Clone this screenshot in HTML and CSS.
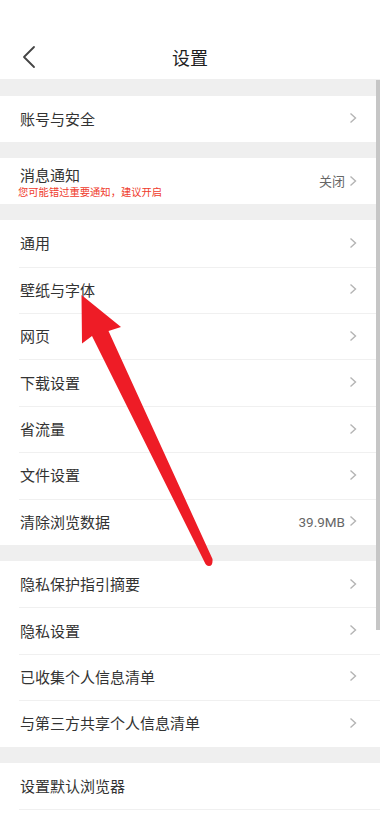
FILE: index.html
```html
<!DOCTYPE html>
<html lang="zh-CN">
<head>
<meta charset="utf-8">
<title>设置</title>
<link rel="stylesheet" href="styles.css">
</head>
<body>
<div class="page">
  <header class="header">
    <div class="nav">
      <svg class="back" width="14" height="24" viewBox="0 0 14 24"><path d="M12 2 L2 12 L12 22" fill="none" stroke="#444" stroke-width="1.8" stroke-linecap="round" stroke-linejoin="round"/></svg>
      <h1 class="title">设置</h1>
    </div>
  </header>

  <div class="gap first"></div>
  <div class="group">
    <div class="row"><span class="label">账号与安全</span><span class="right"><svg class="chev" width="8" height="12" viewBox="0 0 8 12"><path d="M1.5 1.5 L6.5 6 L1.5 10.5" fill="none" stroke="#b4b4b4" stroke-width="1.4"/></svg></span></div>
  </div>

  <div class="gap"></div>
  <div class="group">
    <div class="row">
      <div class="stack"><span class="label">消息通知</span><span class="sub">您可能错过重要通知，建议开启</span></div>
      <span class="right"><span class="value">关闭</span><svg class="chev" width="8" height="12" viewBox="0 0 8 12"><path d="M1.5 1.5 L6.5 6 L1.5 10.5" fill="none" stroke="#b4b4b4" stroke-width="1.4"/></svg></span>
    </div>
  </div>

  <div class="gap"></div>
  <div class="group">
    <div class="row"><span class="label">通用</span><span class="right"><svg class="chev" width="8" height="12" viewBox="0 0 8 12"><path d="M1.5 1.5 L6.5 6 L1.5 10.5" fill="none" stroke="#b4b4b4" stroke-width="1.4"/></svg></span></div>
    <div class="row"><span class="label">壁纸与字体</span><span class="right"><svg class="chev" width="8" height="12" viewBox="0 0 8 12"><path d="M1.5 1.5 L6.5 6 L1.5 10.5" fill="none" stroke="#b4b4b4" stroke-width="1.4"/></svg></span></div>
    <div class="row"><span class="label">网页</span><span class="right"><svg class="chev" width="8" height="12" viewBox="0 0 8 12"><path d="M1.5 1.5 L6.5 6 L1.5 10.5" fill="none" stroke="#b4b4b4" stroke-width="1.4"/></svg></span></div>
    <div class="row"><span class="label">下载设置</span><span class="right"><svg class="chev" width="8" height="12" viewBox="0 0 8 12"><path d="M1.5 1.5 L6.5 6 L1.5 10.5" fill="none" stroke="#b4b4b4" stroke-width="1.4"/></svg></span></div>
    <div class="row"><span class="label">省流量</span><span class="right"><svg class="chev" width="8" height="12" viewBox="0 0 8 12"><path d="M1.5 1.5 L6.5 6 L1.5 10.5" fill="none" stroke="#b4b4b4" stroke-width="1.4"/></svg></span></div>
    <div class="row"><span class="label">文件设置</span><span class="right"><svg class="chev" width="8" height="12" viewBox="0 0 8 12"><path d="M1.5 1.5 L6.5 6 L1.5 10.5" fill="none" stroke="#b4b4b4" stroke-width="1.4"/></svg></span></div>
    <div class="row"><span class="label">清除浏览数据</span><span class="right"><span class="value num">39.9MB</span><svg class="chev" width="8" height="12" viewBox="0 0 8 12"><path d="M1.5 1.5 L6.5 6 L1.5 10.5" fill="none" stroke="#b4b4b4" stroke-width="1.4"/></svg></span></div>
  </div>

  <div class="gap"></div>
  <div class="group">
    <div class="row"><span class="label">隐私保护指引摘要</span><span class="right"><svg class="chev" width="8" height="12" viewBox="0 0 8 12"><path d="M1.5 1.5 L6.5 6 L1.5 10.5" fill="none" stroke="#b4b4b4" stroke-width="1.4"/></svg></span></div>
    <div class="row"><span class="label">隐私设置</span><span class="right"><svg class="chev" width="8" height="12" viewBox="0 0 8 12"><path d="M1.5 1.5 L6.5 6 L1.5 10.5" fill="none" stroke="#b4b4b4" stroke-width="1.4"/></svg></span></div>
    <div class="row"><span class="label">已收集个人信息清单</span><span class="right"><svg class="chev" width="8" height="12" viewBox="0 0 8 12"><path d="M1.5 1.5 L6.5 6 L1.5 10.5" fill="none" stroke="#b4b4b4" stroke-width="1.4"/></svg></span></div>
    <div class="row"><span class="label">与第三方共享个人信息清单</span><span class="right"><svg class="chev" width="8" height="12" viewBox="0 0 8 12"><path d="M1.5 1.5 L6.5 6 L1.5 10.5" fill="none" stroke="#b4b4b4" stroke-width="1.4"/></svg></span></div>
  </div>

  <div class="gap"></div>
  <div class="group">
    <div class="row"><span class="label">设置默认浏览器</span></div>
    <div class="row"></div>
  </div>

  <div class="scrollbar"></div>

  <svg class="arrow" width="380" height="823" viewBox="0 0 380 823">
    <path d="M81.5 295 L121 327 L108.5 331 L212.5 559 Q213 566 209 566 Q206 566 204.5 562 L92 336 L82 343.5 Z" fill="#ee1c26"/>
  </svg>
</div>
</body>
</html>
```

FILE: styles.css
```css
* { box-sizing: border-box; }
html, body { margin: 0; padding: 0; background: #fff; }
body {
  font-family: "Noto Sans CJK SC", "Noto Sans", sans-serif;
  color: #333;
}
.page {
  position: relative;
  width: 380px;
  height: 823px;
  overflow: hidden;
  background: #fff;
}
.header {
  height: 79px;
  padding-top: 35px;
}
.nav {
  position: relative;
  height: 44px;
  display: flex;
  align-items: center;
  justify-content: center;
}
.back {
  position: absolute;
  left: 22px;
  top: 10px;
}
.title {
  margin: 0;
  font-size: 18px;
  font-weight: 400;
  color: #1e1e1e;
  line-height: 24px;
}
.gap {
  height: 16px;
  background: #efefef;
}
.gap.first { height: 16.5px; }
.group { background: #fff; }
.row {
  position: relative;
  height: 46.4px;
  display: flex;
  align-items: center;
  justify-content: space-between;
  padding: 0 23px 0 20px;
}
.row + .row::before {
  content: "";
  position: absolute;
  left: 19px;
  right: 0;
  top: 0;
  height: 1px;
  background: #f0f0f0;
}
.label {
  font-size: 15px;
  line-height: 20px;
  color: #333;
}
.stack {
  display: flex;
  flex-direction: column;
}
.stack .label { line-height: 20px; margin-top: 2px; }
.sub {
  font-size: 10.3px;
  line-height: 14px;
  color: #ef3b2c;
  margin-left: -2px;
}
.right {
  display: flex;
  align-items: center;
  gap: 4px;
}
.value {
  font-size: 13px;
  color: #666;
  line-height: 18px;
}
.num {
  font-family: Roboto, "Noto Sans", sans-serif;
  font-size: 13.5px;
  color: #666;
}
.chev { display: block; margin-top: -1px; }
.scrollbar {
  position: absolute;
  right: 0;
  top: 80px;
  width: 4px;
  height: 550px;
  background: #c6c6c6;
}
.arrow {
  position: absolute;
  left: 0;
  top: 0;
  pointer-events: none;
}
```
